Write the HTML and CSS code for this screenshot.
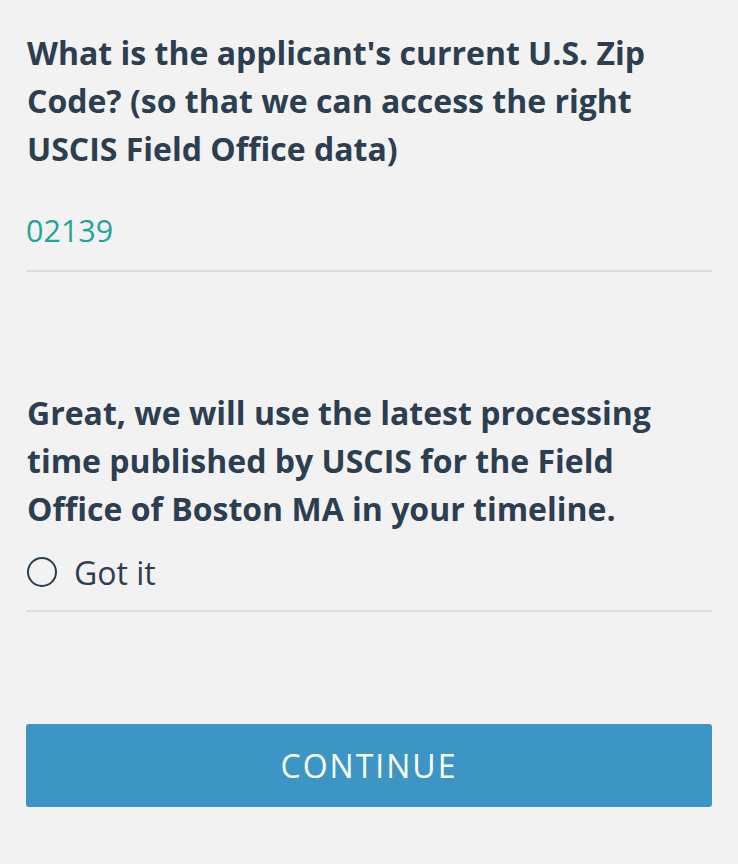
FILE: index.html
```html
<!DOCTYPE html>
<html lang="en">
<head>
<meta charset="utf-8">
<title>Zip Code</title>
<link rel="stylesheet" href="styles.css">
</head>
<body>
<main class="page">
  <section class="question">
    <h2 class="prompt">What is the applicant's current U.S. Zip Code? (so that we can access the right USCIS Field Office data)</h2>
    <div class="field">
      <input class="zip" type="text" value="02139" aria-label="Zip Code">
    </div>
  </section>
  <section class="question second">
    <h2 class="prompt">Great, we will use the latest processing time published by USCIS for the Field Office of Boston MA in your timeline.</h2>
    <label class="choice">
      <span class="radio"></span>
      <span class="choice-text">Got it</span>
    </label>
  </section>
  <button class="continue" type="button">CONTINUE</button>
</main>
</body>
</html>
```
FILE: styles.css
```css
html, body {
  margin: 0;
  padding: 0;
  background: #f2f2f2;
}
body {
  font-family: "Open Sans", "Noto Sans", sans-serif;
  color: #2c3e50;
}
.page {
  padding: 29px 26px 0 26px;
  display: flex;
  flex-direction: column;
}
.prompt {
  margin: 0;
  padding: 0 24px 0 1px;
  font-size: 32px;
  font-weight: 700;
  line-height: 48px;
  color: #2c3e50;
}
.field {
  margin-top: 33px;
  padding-bottom: 16px;
  border-bottom: 2px solid #dddddd;
}
.zip {
  display: block;
  width: 100%;
  box-sizing: border-box;
  border: 0;
  background: transparent;
  padding: 0;
  margin: 0;
  height: 48px;
  font-family: "Open Sans", "Noto Sans", sans-serif;
  font-size: 30.5px;
  color: #1fa59b;
  outline: none;
}
.second {
  margin-top: 117px;
}
.choice {
  display: flex;
  align-items: center;
  gap: 17px;
  height: 48px;
  margin-top: 15px;
  padding-bottom: 14px;
  border-bottom: 2px solid #dddddd;
}
.radio {
  width: 26px;
  height: 26px;
  border: 2.5px solid #2c3e50;
  border-radius: 50%;
  margin-left: 1px;
  flex: none;
}
.choice-text {
  font-size: 32px;
  color: #2c3e50;
}
.continue {
  margin-top: 112px;
  height: 83px;
  border: 0;
  border-radius: 3px;
  background: #3d95c6;
  color: #ffffff;
  font-family: "Open Sans", "Noto Sans", sans-serif;
  font-size: 32px;
  letter-spacing: 2px;
  cursor: pointer;
}
```
